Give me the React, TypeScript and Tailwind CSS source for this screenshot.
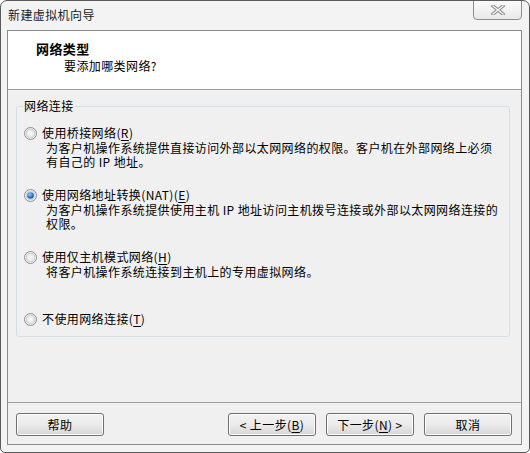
import React from "react";

const font = { fontFamily: '"Noto Sans CJK SC", "Noto Sans", sans-serif' };

function Radio({ checked }: { checked?: boolean }) {
  return (
    <svg width="13" height="13" viewBox="0 0 13 13" className="shrink-0">
      <defs>
        <radialGradient id={checked ? "rgc" : "rgu"} cx="0.5" cy="0.5" r="0.6">
          <stop offset="0" stopColor="#ffffff" />
          <stop offset="1" stopColor="#d8d8d8" />
        </radialGradient>
        <radialGradient id="dot" cx="0.4" cy="0.35" r="0.7">
          <stop offset="0" stopColor="#8fd0ff" />
          <stop offset="0.6" stopColor="#2a78c8" />
          <stop offset="1" stopColor="#1b4f8f" />
        </radialGradient>
      </defs>
      <circle cx="6.5" cy="6.5" r="6" fill="#f5f5f5" stroke="#8f8f8f" strokeWidth="1" />
      <circle cx="6.5" cy="6.5" r="4.5" fill={`url(#${checked ? "rgc" : "rgu"})`} stroke="#c6c6c6" strokeWidth="0.8" />
      {checked && <circle cx="6.5" cy="6.5" r="3.3" fill="url(#dot)" />}
    </svg>
  );
}

function U({ children }: { children: React.ReactNode }) {
  return <span className="underline underline-offset-2">{children}</span>;
}

function Option({
  checked,
  label,
  desc,
}: {
  checked?: boolean;
  label: React.ReactNode;
  desc?: React.ReactNode;
}) {
  return (
    <div className="h-[62px] flex flex-col">
      <div className="flex items-center h-[14px] gap-[5px]">
        <Radio checked={checked} />
        <span className="leading-[14px]">{label}</span>
      </div>
      {desc && <div className="pl-[22px] mt-[1px] leading-[14px] pr-2">{desc}</div>}
    </div>
  );
}

function Btn({ children }: { children: React.ReactNode }) {
  return (
    <div className="w-[88px] h-[23px] rounded-[3px] border border-[#707070] bg-gradient-to-b from-[#f2f2f2] via-[#ebebeb] to-[#d6d6d6] flex items-center justify-center text-[12px] text-black shadow-[inset_0_0_0_1px_#fcfcfc]">
      {children}
    </div>
  );
}

export default function App() {
  return (
    <div
      className="w-[530px] h-[453px] bg-[#f3f3f3] border border-[#5a5a5a] rounded-t-[7px] rounded-b-[5px] flex flex-col text-[12px] text-black tracking-[0.4px] overflow-hidden"
      style={font}
    >
      <div className="relative h-[29px] shrink-0">
        <div className="pl-[7px] pt-[6px] leading-[16px] text-[12px] text-[#1a1a1a]">新建虚拟机向导</div>
        <div className="absolute right-[7px] top-[-1px] w-[49px] h-[20px] rounded-b-[4px] border border-[#8d8d8d] bg-gradient-to-b from-[#fbfbfb] to-[#e9e9e9] flex items-center justify-center">
          <svg width="14" height="10" viewBox="0 0 14 10">
            <path d="M2 1 L12 9 M12 1 L2 9" stroke="#8a8a8a" strokeWidth="3.4" strokeLinecap="square" />
            <path d="M2 1 L12 9 M12 1 L2 9" stroke="#f7f7f7" strokeWidth="1.4" strokeLinecap="square" />
          </svg>
        </div>
      </div>
      <div className="ml-[6px] mr-[7px] h-[415px] border border-[#8a8a8a] bg-[#f0f0f0] flex flex-col">
        <div className="h-[59px] bg-white border-b border-[#a0a0a0] shrink-0">
          <div className="pl-[28px] pt-[10px] font-bold text-[13px] leading-[16px]">网络类型</div>
          <div className="pl-[56px] pt-[1px] leading-[16px]">要添加哪类网络?</div>
        </div>
        <div className="h-[312px] pt-[16px] pl-[8px]">
          <div className="relative w-[494px] h-[231px] border border-[#d5dfe5] rounded-[3px] pl-[7px] pt-[19px]">
            <div className="absolute left-[6px] top-[-8px] bg-[#f0f0f0] px-[1px] leading-[14px]">网络连接</div>
            <Option
              label={
                <>
                  使用桥接网络(<U>R</U>)
                </>
              }
              desc={
                <>
                  为客户机操作系统提供直接访问外部以太网网络的权限。客户机在外部网络上必须
                  <br />
                  有自己的 IP 地址。
                </>
              }
            />
            <Option
              checked
              label={
                <>
                  使用网络地址转换(NAT)(<U>E</U>)
                </>
              }
              desc={
                <>
                  为客户机操作系统提供使用主机 IP 地址访问主机拨号连接或外部以太网网络连接的
                  <br />
                  权限。
                </>
              }
            />
            <Option
              label={
                <>
                  使用仅主机模式网络(<U>H</U>)
                </>
              }
              desc={<>将客户机操作系统连接到主机上的专用虚拟网络。</>}
            />
            <Option
              label={
                <>
                  不使用网络连接(<U>T</U>)
                </>
              }
            />
          </div>
        </div>
        <div className="flex-1 border-t border-[#a0a0a0] pt-[10px] pl-[8px] pr-[9px] flex">
          <Btn>帮助</Btn>
          <div className="flex-1" />
          <div className="flex gap-[10px]">
            <Btn>
              &lt; 上一步(<U>B</U>)
            </Btn>
            <Btn>
              下一步(<U>N</U>) &gt;
            </Btn>
            <Btn>取消</Btn>
          </div>
        </div>
      </div>
    </div>
  );
}
